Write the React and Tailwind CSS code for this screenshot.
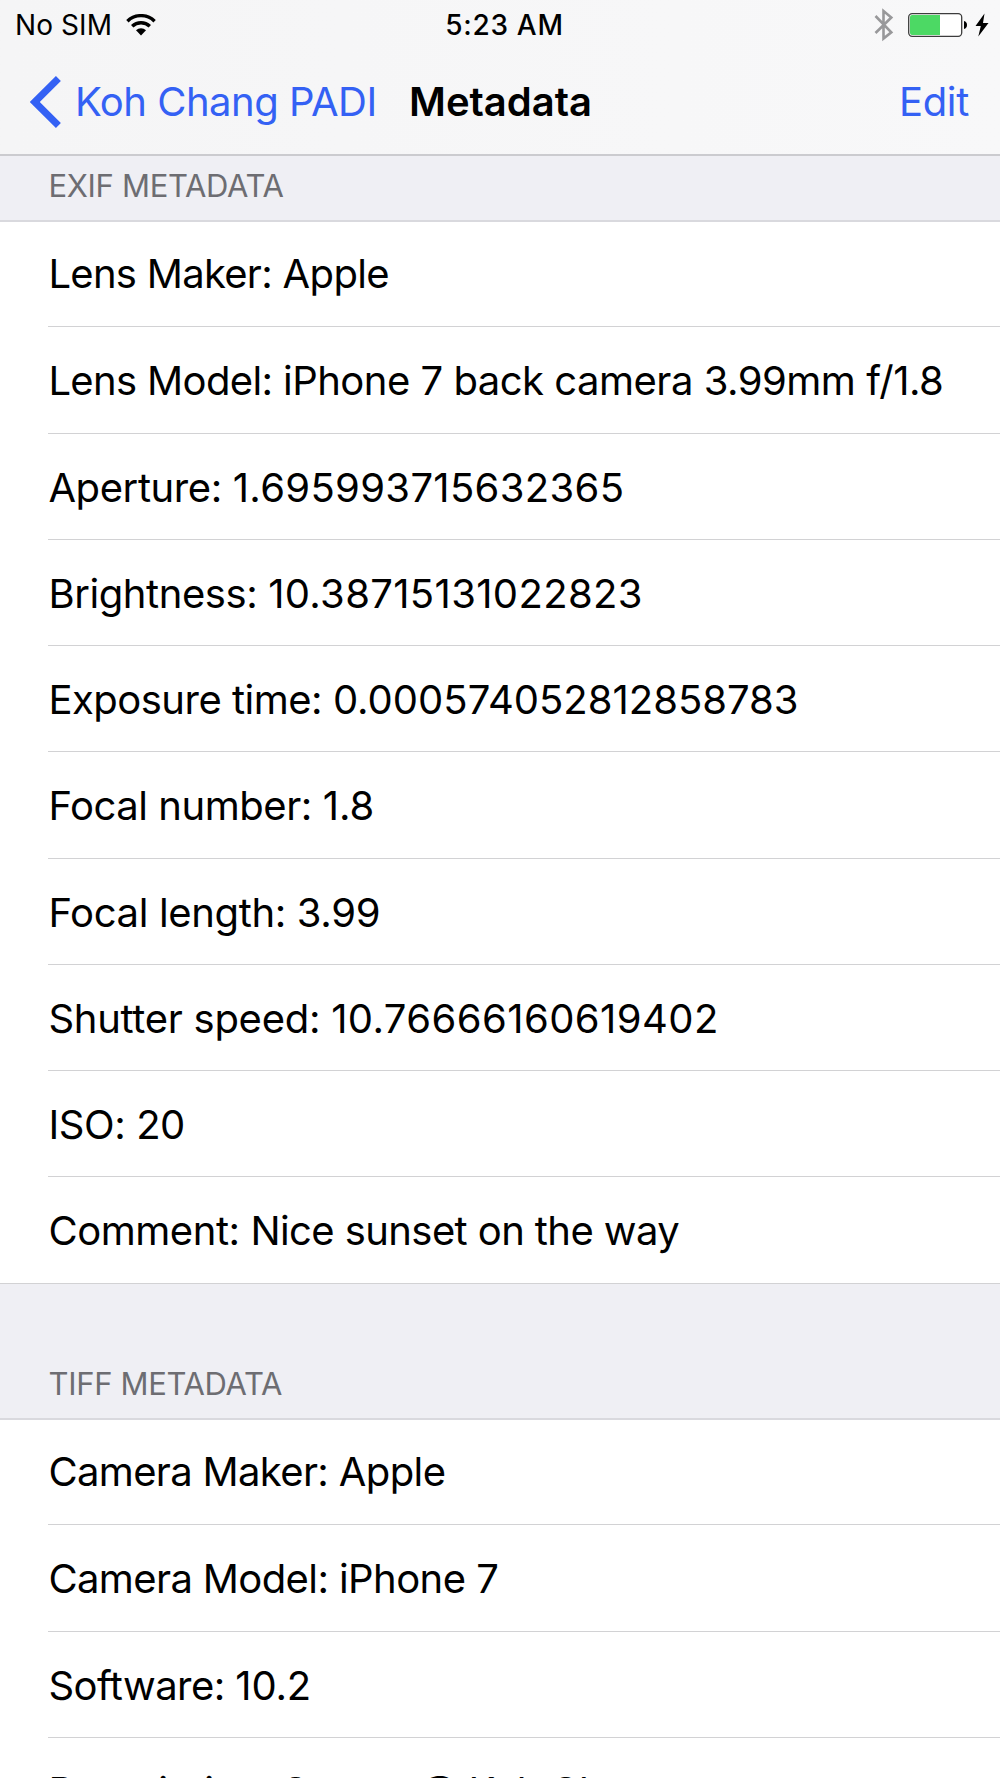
const SECTIONS = [
  {
    id: "exif",
    title: "EXIF METADATA",
    header: "h-[66px] pt-[13px]",
    rows: [
      { label: "Lens Maker", value: "Apple", lt: "tracking-[-0.72px]", vt: "tracking-[-0.6px]" },
      { label: "Lens Model", value: "iPhone 7 back camera 3.99mm f/1.8", lt: "tracking-[-0.65px]", vt: "tracking-[-0.5px]" },
      { label: "Aperture", value: "1.695993715632365", lt: "tracking-[-0.4px]", vt: "tracking-[0.33px]" },
      { label: "Brightness", value: "10.38715131022823", lt: "tracking-[-0.42px]", vt: "tracking-[0.35px]" },
      { label: "Exposure time", value: "0.000574052812858783", lt: "tracking-[-0.5px]", vt: "tracking-[0px]" },
      { label: "Focal number", value: "1.8", lt: "tracking-[-0.45px]", vt: "tracking-[0px]" },
      { label: "Focal length", value: "3.99", lt: "tracking-[-0.35px]", vt: "tracking-[-0.3px]" },
      { label: "Shutter speed", value: "10.76666160619402", lt: "tracking-[-0.28px]", vt: "tracking-[0.43px]" },
      { label: "ISO", value: "20", lt: "tracking-[-0.4px]", vt: "tracking-[-0.6px]" },
      { label: "Comment", value: "Nice sunset on the way", lt: "tracking-[-0.45px]", vt: "tracking-[-0.59px]" },
    ],
  },
  {
    id: "tiff",
    title: "TIFF METADATA",
    header: "h-[136.5px] pt-[83px]",
    rows: [
      { label: "Camera Maker", value: "Apple", lt: "tracking-[-0.66px]", vt: "tracking-[-0.6px]" },
      { label: "Camera Model", value: "iPhone 7", lt: "tracking-[-0.62px]", vt: "tracking-[-0.55px]" },
      { label: "Software", value: "10.2", lt: "tracking-[-0.55px]", vt: "tracking-[-0.2px]" },
      {
        label: "Description",
        value: <>Sunset <span className="relative -top-[2px]">@</span> Koh Chang</>,
        lt: "tracking-[-0.4px]",
        vt: "tracking-[-0.6px] [font-feature-settings:'calt'_0]",
      },
    ],
  },
];

export default function App() {
  return (
    <div className="w-[1000px] h-[1778px] overflow-hidden bg-white font-['Inter',sans-serif] text-black">
      <header className="h-[156px] border-b-2 border-[#cbcbcf] bg-linear-to-r from-[#f5f5f6] to-[#f8f8f9]">
        <StatusBar />
        <NavBar />
      </header>
      {SECTIONS.map(s => <Section key={s.id} section={s} />)}
    </div>
  );
}


function StatusBar() {
  return (
    <div className="grid grid-cols-3 items-center h-[50px] pl-[15px] pr-[11px] text-[28px] leading-[50px]">
      <div className="flex items-center">
        <span className="tracking-[0.1px]">No SIM</span>
        <WifiIcon />
      </div>
      <span className="pl-[5px] text-center font-medium tracking-[0.7px]">5:23 AM</span>
      <div className="flex items-center justify-end">
        <BluetoothIcon />
        <BatteryIcon />
        <BoltIcon />
      </div>
    </div>
  );
}


function NavBar() {
  return (
    <nav className="flex items-center h-[104px] pl-[30px] pr-[31px] text-[40px] leading-[104px] whitespace-nowrap">
      <button className="flex items-center w-[379px] text-[#3461f4]">
        <svg className="w-[31px] h-[52px] mr-[14px] shrink-0" viewBox="0 0 31 52" fill="none" stroke="currentColor" strokeWidth="7">
          <path d="M28.4 2.6 4.8 26 28.4 49.4" />
        </svg>
        <span className="tracking-[-0.5px]">Koh Chang PADI</span>
      </button>
      <h1 className="font-semibold">Metadata</h1>
      <button className="ml-auto tracking-[-0.3px] text-[#3461f4]">Edit</button>
    </nav>
  );
}


function Section({ section }) {
  return (
    <section>
      <h2 className={`${section.header} pl-[48.5px] border-b-2 border-[#d9d9de] bg-[#efeff4] text-[31px] leading-[34px] tracking-[-0.33px] text-[#6d6d72]`}>
        {section.title}
      </h2>
      <ul className="flex flex-col">
        {section.rows.map(r => <MetaRow key={r.label} row={r} />)}
      </ul>
    </section>
  );
}


function MetaRow({ row }) {
  return (
    <li className="group h-[106.25px] first:h-[105.25px] pl-[48px] last:pl-0">
      <p className="h-full border-b border-[#d2d2d4] pl-[0.4px] group-last:pl-[48.4px] text-[40px] leading-[107.2px] group-first:leading-[104.6px] whitespace-nowrap">
        <span className={row.lt}>{row.label}: </span>
        <span className={row.vt}>{row.value}</span>
      </p>
    </li>
  );
}


function WifiIcon() {
  return (
    <svg className="w-[30px] h-[22px] ml-[14px]" viewBox="0 0 30 22" fill="none" stroke="black" strokeWidth="3.4">
      <path d="M1.4 7.2a19.4 19.4 0 0 1 27.2 0" />
      <path d="M6.2 12.3a12.6 12.6 0 0 1 17.6 0" />
      <path d="M10 16.3a7.2 7.2 0 0 1 10 0L15 21.5z" fill="black" stroke="none" />
    </svg>
  );
}

function BluetoothIcon() {
  return (
    <svg className="w-[20px] h-[34px] mr-[14px]" viewBox="0 0 20 34" fill="none" stroke="#98989a" strokeWidth="2.6">
      <path d="M1.5 8 17.3 24.3 9.5 30.5V3l7.8 6.5L1.5 25" />
    </svg>
  );
}

function BatteryIcon() {
  return (
    <svg className="w-[60px] h-[24px] mr-[7px]" viewBox="0 0 60 24">
      <rect x="0.7" y="0.7" width="53" height="22.6" rx="3.5" fill="white" stroke="#3c3c3c" strokeWidth="1.3" />
      <path d="M4 2h28v20H4a2 2 0 0 1-2-2V4a2 2 0 0 1 2-2z" fill="#4cd964" />
      <path d="M56 8c2 .5 3 2 3 4s-1 3.5-3 4z" fill="black" />
    </svg>
  );
}

function BoltIcon() {
  return (
    <svg className="w-[14px] h-[24px]" viewBox="0 0 14 24">
      <path d="M9.5 0.5 0.5 13h5.3L3.3 23.5 13.5 10H8z" fill="black" />
    </svg>
  );
}
